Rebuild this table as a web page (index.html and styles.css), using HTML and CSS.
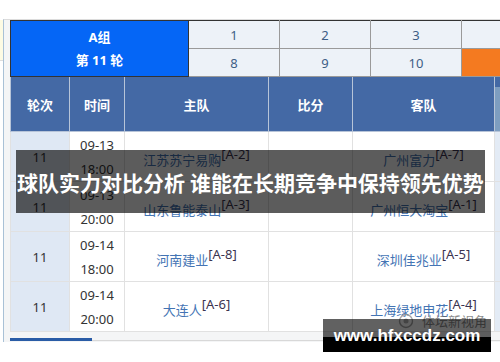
FILE: index.html
```html
<!DOCTYPE html>
<html lang="zh">
<head>
<meta charset="utf-8">
<title>球队实力对比分析</title>
<link rel="stylesheet" href="styles.css">
</head>
<body>
<div class="page">
  <div class="spacer"></div>
  <div class="frame">
    <table class="grp">
      <colgroup><col class="c-g"><col class="c-n"><col class="c-n"><col class="c-n"><col class="c-n"></colgroup>
      <tr>
        <td class="gname" rowspan="2"><div>A组</div><div>第 11 轮</div></td>
        <td>1</td><td>2</td><td>3</td><td></td>
      </tr>
      <tr>
        <td>8</td><td>9</td><td>10</td><td class="cur"></td>
      </tr>
    </table>
    <table class="matches">
      <colgroup><col class="c1"><col class="c2"><col class="c3"><col class="c4"><col class="c5"><col class="c6"></colgroup>
      <thead>
        <tr><th>轮次</th><th>时间</th><th>主队</th><th>比分</th><th>客队</th><th class="extra"></th></tr>
      </thead>
      <tbody>
        <tr>
          <td class="rnd">11</td><td class="time">09-13<br>18:00</td>
          <td><a class="team">江苏苏宁易购</a><span class="tag">[A-2]</span></td><td></td>
          <td><a class="team">广州富力</a><span class="tag">[A-7]</span></td><td class="extra"></td>
        </tr>
        <tr>
          <td class="rnd">11</td><td class="time">09-13<br>20:00</td>
          <td><a class="team">山东鲁能泰山</a><span class="tag">[A-3]</span></td><td></td>
          <td><a class="team">广州恒大淘宝</a><span class="tag">[A-1]</span></td><td class="extra"></td>
        </tr>
        <tr>
          <td class="rnd">11</td><td class="time">09-14<br>18:00</td>
          <td><a class="team">河南建业</a><span class="tag">[A-8]</span></td><td></td>
          <td><a class="team">深圳佳兆业</a><span class="tag">[A-5]</span></td><td class="extra"></td>
        </tr>
        <tr>
          <td class="rnd">11</td><td class="time">09-14<br>20:00</td>
          <td><a class="team">大连人</a><span class="tag">[A-6]</span></td><td></td>
          <td><a class="team">上海绿地申花</a><span class="tag">[A-4]</span></td><td class="extra"></td>
        </tr>
      </tbody>
    </table>
    <div class="tabbar"><div class="tab"></div><div class="rest"></div></div>
  </div>
  <div class="banner">球队实力对比分析 谁能在长期竞争中保持领先优势</div>
  <div class="logo">
    <svg width="16" height="16" viewBox="0 0 16 16"><circle cx="8" cy="8" r="6.5" fill="none" stroke="#888" stroke-width="1.4"/><circle cx="8" cy="8" r="2.5" fill="#999"/></svg>
    <span>体坛新视角</span>
  </div>
  <div class="wm">www.hfxccdz.com</div>
</div>
</body>
</html>
```
FILE: styles.css
```css
html, body {
  margin: 0;
  padding: 0;
  background: #fff;
}
body {
  width: 500px;
  height: 362px;
  overflow: hidden;
  font-family: "Noto Sans", "Noto Sans CJK SC", sans-serif;
  font-size: 13px;
  color: #333;
}
.page {
  position: relative;
  width: 500px;
  height: 362px;
  overflow: hidden;
}
.spacer {
  height: 19px;
}
.frame {
  position: relative;
  height: 323px;
  box-sizing: border-box;
  border-top: 1px solid #dcdcdc;
  border-left: 1px solid #a9c1d6;
  margin-left: 3px;
  padding-left: 6px;
  background: #f4f5f6;
}
.frame::before {
  content: "";
  position: absolute;
  left: -4px;
  top: 0;
  width: 3px;
  height: 40px;
  background: #fdfbe4;
  border-bottom: 1px solid #ddd;
}
.grp {
  border-collapse: collapse;
  table-layout: fixed;
  width: 542px;
  font-size: 13px;
}
.grp .c-g { width: 178px; }
.grp .c-n { width: 91px; }
.grp td {
  height: 27px;
  padding: 0;
  text-align: center;
  background: #edf2f8;
  color: #3d5e86;
  border: 1px solid #9a9a9a;
  border-top-color: #333;
}
.grp tr + tr td {
  border-top-color: #9a9a9a;
}
.grp td.gname {
  background: #0566f6;
  border: 1px solid #333;
  color: #fff;
  font-weight: bold;
  line-height: 23px;
}
.grp td.cur {
  background: #f47a20;
}
.matches {
  border-collapse: collapse;
  table-layout: fixed;
  width: 504px;
}
.matches .c1 { width: 59px; }
.matches .c2 { width: 55px; }
.matches .c3 { width: 144px; }
.matches .c4 { width: 84px; }
.matches .c5 { width: 142px; }
.matches .c6 { width: 20px; }
.matches th {
  height: 54px;
  padding: 0;
  background: #4469a5;
  color: #fff;
  font-weight: bold;
  font-size: 13px;
  border: 1px solid #b7c4d8;
  border-top: none;
}
.matches th.extra {
  background: linear-gradient(#4469a5 0, #4469a5 10px, #7d9dc0 10px);
}
.matches td {
  height: 49px;
  padding: 0;
  text-align: center;
  background: #fff;
  border: 1px solid #e1e1e1;
  color: #333;
}
.matches td.rnd {
  background: #dfe8f4;
}
.matches td.extra {
  background: #e3ebf5;
}
.matches td.time {
  line-height: 24px;
}
.team {
  color: #4474b4;
  text-decoration: none;
}
.tag {
  color: #3b3450;
  vertical-align: 6px;
}
.tabbar {
  display: flex;
  align-items: flex-end;
  margin-top: 6px;
  height: 3px;
}
.tab {
  width: 82px;
  height: 3px;
  background: #2a5ca6;
}
.rest {
  flex: 1;
  height: 1px;
  background: #d8d8d8;
}
.banner {
  position: absolute;
  left: 16px;
  top: 150px;
  width: 469px;
  height: 63px;
  background: rgba(0, 0, 0, 0.64);
  color: #fff;
  font-family: "Noto Sans CJK SC", sans-serif;
  font-weight: bold;
  font-size: 21px;
  display: flex;
  align-items: center;
  justify-content: center;
  white-space: nowrap;
}
.logo {
  position: absolute;
  left: 398px;
  top: 311px;
  display: flex;
  align-items: center;
  gap: 8px;
  color: #666;
  font-family: "Noto Sans CJK SC", sans-serif;
  font-size: 13px;
  opacity: 0.75;
}
.wm {
  position: absolute;
  left: 323px;
  top: 319px;
  width: 168px;
  height: 33px;
  background: linear-gradient(rgba(0, 0, 0, 0.62) 0, rgba(0, 0, 0, 0.62) 18px, #000 18px);
  color: #fff;
  font-family: "Liberation Sans", sans-serif;
  font-weight: bold;
  font-size: 17px;
  text-align: center;
  line-height: 33px;
}
```
